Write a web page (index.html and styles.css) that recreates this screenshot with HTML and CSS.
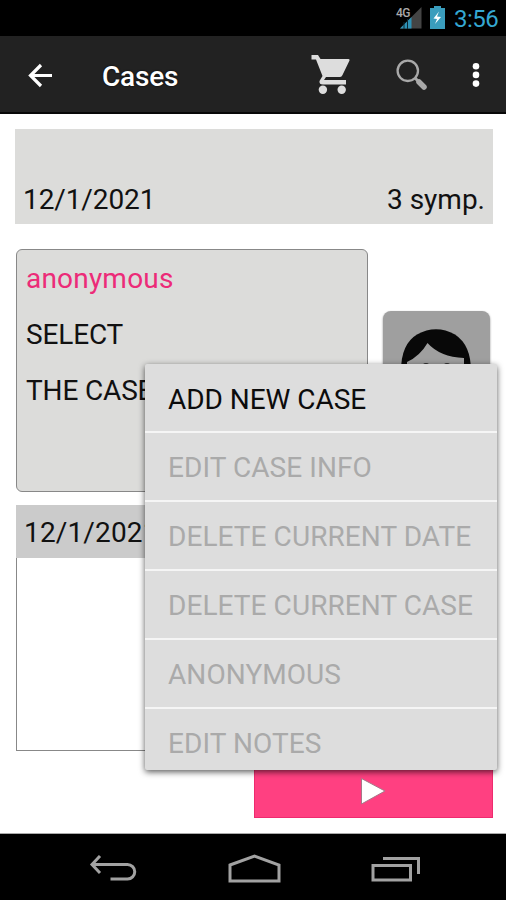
FILE: index.html
```html
<!DOCTYPE html>
<html lang="en">
<head>
<meta charset="utf-8">
<title>Cases</title>
<link rel="stylesheet" href="styles.css">
</head>
<body>
<div class="phone">
  <div class="status">
    <svg class="signal" width="28" height="24" viewBox="0 0 28 24">
      <path d="M27.500 2v21.500H6z" fill="#444"/>
      <path d="M17.500 12v11.500H6z" fill="#2d91b5"/>
      <path d="M10 17v7M13.500 14v10" stroke="#0b2833" stroke-width="1"/>
      <text class="network" x="2" y="11.500">4G</text>
    </svg>
    <svg class="battery" width="15" height="23" viewBox="0 0 15 23">
      <path d="M4 0h7v2h4v21H0V2h4z" fill="#3a9dbd"/>
      <path d="M9 5.500L3.500 12.500l3.500.5-2 5 6-7-4-.5z" fill="#fff"/>
    </svg>
    <span class="clock">3:56</span>
  </div>
  <header class="appbar">
    <svg class="back" width="26" height="26" viewBox="0 0 26 26" fill="none" stroke="#fff" stroke-width="3.200"><path d="M26 13.500H5M15 3L4.500 13.500 15 24"/></svg>
    <h1 class="title">Cases</h1>
    <svg class="cart" width="42" height="42" viewBox="0 0 42 42" fill="#ddd">
      <path d="M1.500 2h6.500l2.500 4h28q1.500 0 1 1.500l-7 14.500q-.8 2-2.500 2H16l-2 3h22v4.500H13q-4 0-3.500-3.500l3-5L6 6.500H1.500z"/>
      <circle cx="12.900" cy="36.700" r="4.200"/><circle cx="31.700" cy="36.700" r="4.200"/>
    </svg>
    <svg class="search" width="32" height="32" viewBox="0 0 32 32" fill="none" stroke="#a9a9a9">
      <circle cx="11.800" cy="11.800" r="10.200" stroke-width="2.300"/><path d="M19 19l4 4" stroke-width="3"/><path d="M23 23l5 5" stroke-width="5.500" stroke-linecap="round"/>
    </svg>
    <svg class="more" width="8" height="26" viewBox="0 0 8 26" fill="#fff"><circle cx="4" cy="4.200" r="3.300"/><circle cx="4" cy="12.900" r="3.300"/><circle cx="4" cy="21.600" r="3.300"/></svg>
  </header>
  <main class="content">
    <div class="summary"><span class="date">12/1/2021</span><span class="symp">3 symp.</span></div>
    <div class="row">
      <section class="case">
        <p class="name">anonymous</p>
        <p class="select">SELECT</p>
        <p class="select">THE CASE</p>
      </section>
      <svg class="avatar" width="107" height="107" viewBox="0 0 107 107">
        <rect width="107" height="107" rx="8" fill="#9f9f9f"/>
        <path d="M18 60Q18 33 34 23.500Q53 13 72 23.500Q88 34 88 60V85H18z" fill="#080808"/>
        <path d="M24 51Q37 45 44.500 32Q57 46 81 47V70Q76 94 53 94Q29 94 24 70z" fill="#9f9f9f"/>
        <path d="M40 54q3-2.500 6 0M61 54q3-2.500 6 0" fill="none" stroke="#333" stroke-width="1.500"/>
      </svg>
    </div>
    <section class="notes"><div class="notes-head">12/1/2021</div></section>
    <button class="play"><svg width="28" height="32" viewBox="0 0 28 32"><path d="M1.500 3.500L25 16 1.500 29z" fill="#fff" stroke="#a77788" stroke-width="1"/></svg></button>
  </main>
  <nav class="nav">
    <svg width="48" height="28" viewBox="0 0 48 28"><path d="M11 1L3 9.500l8 8.500M3 9.500h35.500a7.200 7.200 0 0 1 0 14.500H21.500"/></svg>
    <svg width="53" height="30" viewBox="0 0 53 30"><path d="M2 11L26.500 2 51 11v16H2z"/></svg>
    <svg width="50" height="28" viewBox="0 0 50 28"><path d="M2 10.500h37.500v14.500H2zM12 3.500h35.500V19"/></svg>
  </nav>
  <ul class="menu">
    <li class="item enabled">ADD NEW CASE</li>
    <li class="item">EDIT CASE INFO</li>
    <li class="item">DELETE CURRENT DATE</li>
    <li class="item">DELETE CURRENT CASE</li>
    <li class="item">ANONYMOUS</li>
    <li class="item">EDIT NOTES</li>
  </ul>
</div>
</body>
</html>
```
FILE: styles.css
```css
* { box-sizing: border-box; }
body, h1, p, ul { margin: 0; padding: 0; }
body { background: #fff; font-family: Roboto, "Liberation Sans", sans-serif; color: #111; }
svg { display: block; flex: none; }
.phone { position: relative; width: 506px; height: 900px; overflow: hidden; display: flex; flex-direction: column; }

.status { height: 36px; flex: none; background: #000; display: flex; align-items: flex-start; justify-content: flex-end; padding: 6px 8px 0 0; }
.network { font-size: 12px; font-weight: 500; fill: #aaa; letter-spacing: -0.5px; }
.signal { margin: -1px 8px 0 0; overflow: visible; }
.clock { color: #35a8d2; font-size: 24px; line-height: 27px; width: 44px; margin-left: 9px; letter-spacing: -0.5px; white-space: nowrap; }

.appbar { height: 78px; flex: none; background: #222; border-bottom: 2px solid #080808; display: flex; align-items: center; padding: 0 26px 0 26px; }
.title { color: #fff; font-size: 28px; font-weight: 500; line-height: 34px; letter-spacing: -0.2px; margin: 5px 0 0 50px; flex: 1; text-shadow: 0 0 2px #000; }
.back { margin-top: 1px; }
.cart { margin-right: 44px; }
.search { margin: 1px 44px 0 0; }
.more { margin-top: 1px; }

.content { flex: 1; padding: 15px 13px 15px 15px; display: flex; flex-direction: column; border-bottom: 1px solid #aaa; }
.summary { height: 95px; background: #dcdcda; display: flex; justify-content: space-between; align-items: flex-end; padding: 0 8px 7px 8px; font-size: 28px; line-height: 34px; }
.date { letter-spacing: -0.1px; }
.row { display: flex; align-items: flex-start; justify-content: space-between; margin: 25px 3px 0 1px; height: 243px; }
.case { width: 352px; height: 243px; background: #dcdcda; border: 1px solid #888; border-radius: 6px; padding: 1px 9px; font-size: 28px; line-height: 56px; }
.name { color: #ec2b78; letter-spacing: 0.2px; }
.select { letter-spacing: -0.15px; }
.avatar { margin-top: 62px; filter: drop-shadow(0 1px 1px #999); }
.notes { width: 474px; height: 246px; margin: 13px 0 0 1px; border: 1px solid #888; border-top: 0; }
.notes-head { height: 53px; margin: 0 -1px; background: #cbcbcb; padding: 0 8px; font-size: 28px; line-height: 55px; letter-spacing: 0.15px; }
.play { align-self: flex-end; width: 239px; height: 55px; margin-top: 12px; padding: 0; background: #ff4081; border: 1px solid #ee2b6f; display: flex; align-items: center; justify-content: center; }

.nav { height: 67px; flex: none; background: #000; display: flex; align-items: center; justify-content: space-between; padding: 2px 85px 0 89px; }
.nav path { fill: none; stroke: #a2a2a2; stroke-width: 3; }

.menu { position: absolute; left: 145px; top: 364px; width: 352px; height: 406px; overflow: visible; list-style: none; background: #ddd; border-radius: 2px; box-shadow: 0 2px 6px rgba(0,0,0,.65); }
.item { height: 69px; padding: 2px 23px 0; color: #aaa; font-size: 28px; line-height: 66px; letter-spacing: 0.07px; white-space: nowrap; border-bottom: 2px solid #f5f5f5; }
.item:last-child { height: 61px; border-bottom: 0; }
.enabled { color: #0c0c0c; line-height: 67px; letter-spacing: -0.05px; }
```
